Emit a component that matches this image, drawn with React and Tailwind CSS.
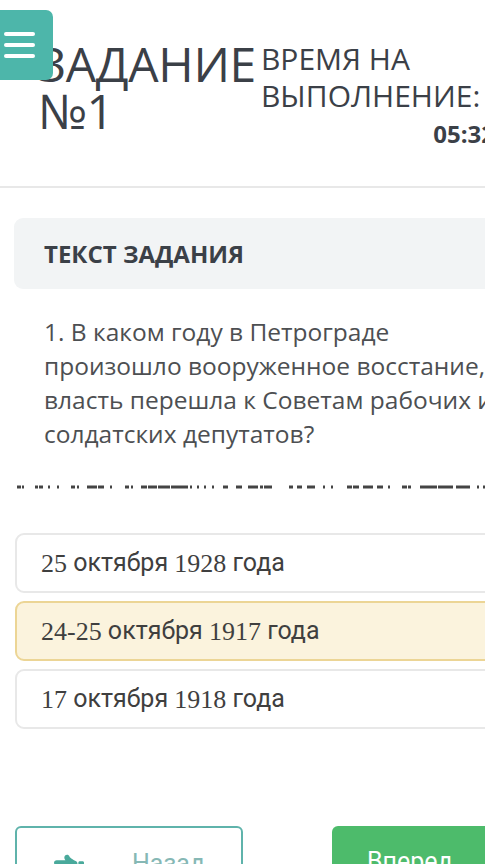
import React from "react";
import { FaHandPointLeft } from "react-icons/fa";

const dashes = [
  [17, 4], [22, 2], [35, 3], [39, 4], [48, 2], [57, 2], [71, 4], [77, 2],
  [87, 10], [98, 6], [110, 2], [125, 4], [131, 2], [141, 6], [148, 9],
  [158, 12], [171, 17], [190, 2], [197, 2], [204, 2], [212, 2], [223, 5],
  [236, 6], [248, 10], [260, 3], [264, 8], [289, 4], [297, 5], [307, 8],
  [323, 2], [331, 2], [347, 5], [353, 6], [363, 10], [377, 6], [388, 2],
  [402, 5], [408, 3], [420, 17], [438, 15], [456, 14], [477, 2], [483, 4],
];

function Answer({ children, selected }) {
  return (
    <div
      className={
        "h-[60px] w-[520px] rounded-[9px] border-2 flex items-center pl-[24px] text-[25px] text-[#3f3f3f] " +
        (selected ? "bg-[#fbf3dd] border-[#ecd595]" : "bg-white border-[#e8e8e8]")
      }
      style={{ fontFamily: "Roboto, 'Noto Sans', sans-serif" }}
    >
      {children}
    </div>
  );
}

const D = ({ children }) => (
  <span className="text-[26px]" style={{ fontFamily: "'Liberation Serif', serif" }}>
    {children}
  </span>
);

export default function App() {
  return (
    <div
      className="relative w-[485px] h-[864px] overflow-hidden bg-white"
      style={{ fontFamily: "'Open Sans', sans-serif" }}
    >
      {/* Header */}
      <div className="relative h-[188px] border-b-2 border-[#e8e8e8] w-[600px]">
        <div className="flex pl-[38px] pt-[40px] gap-[5px]">
          <div className="text-[48px] leading-[47px] text-[#3b4047] font-normal tracking-[-0.3px]">
            <div>ЗАДАНИЕ</div>
            <div>№1</div>
          </div>
          <div className="flex flex-col pt-[0px] w-[234px]">
            <div className="text-[30px] leading-[37px] text-[#3b4047] font-normal">
              <div>ВРЕМЯ НА</div>
              <div>ВЫПОЛНЕНИЕ:</div>
            </div>
            <div className="text-right text-[24px] font-bold text-[#3b4047] leading-[40px]">
              05:32
            </div>
          </div>
        </div>
        <div className="absolute left-0 top-[10px] w-[53px] h-[70px] bg-[#4db6aa] rounded-r-[7px] flex flex-col gap-[7px] pl-[4px] pt-[22px]">
          <div className="w-[31px] h-[4px] bg-white rounded-full" />
          <div className="w-[31px] h-[4px] bg-white rounded-full" />
          <div className="w-[31px] h-[4px] bg-white rounded-full" />
        </div>
      </div>

      {/* Task box */}
      <div className="ml-[14px] mt-[30px] w-[520px] h-[71px] bg-[#f2f4f5] rounded-[9px] flex items-center pl-[30px]">
        <span className="text-[24px] font-bold text-[#3b4047]">ТЕКСТ ЗАДАНИЯ</span>
      </div>

      {/* Question */}
      <div className="pl-[44px] pt-[26px] text-[24.5px] leading-[34px] text-[#4d4f52] whitespace-nowrap">
        <div>1. В каком году в Петрограде</div>
        <div>произошло вооруженное восстание, и</div>
        <div>власть перешла к Советам рабочих и</div>
        <div>солдатских депутатов?</div>
      </div>

      {/* Dashed line */}
      <svg className="block mt-[34px]" width="485" height="4" viewBox="0 0 485 4">
        {dashes.map(([x, w], i) => (
          <rect key={i} x={x} y="0.5" width={w} height="3" fill="#444444" />
        ))}
      </svg>

      {/* Answers */}
      <div className="ml-[15px] mt-[44px] flex flex-col gap-[8px]">
        <Answer>
          <D>25</D>&nbsp;октября&nbsp;<D>1928</D>&nbsp;года
        </Answer>
        <Answer selected>
          <D>24-25</D>&nbsp;октября&nbsp;<D>1917</D>&nbsp;года
        </Answer>
        <Answer>
          <D>17</D>&nbsp;октября&nbsp;<D>1918</D>&nbsp;года
        </Answer>
      </div>

      {/* Buttons */}
      <div className="flex mt-[97px] pl-[15px] gap-[89px] w-[700px]">
        <div className="shrink-0 w-[228px] h-[60px] border-2 border-[#5fb3ab] rounded-[6px] flex items-start pt-[21px] pl-[37px]">
          <FaHandPointLeft className="shrink-0 text-[#49a99b] mt-[2px]" size={30} />
          <span className="ml-[48px] text-[25px] leading-[30px] text-[#86b8b5]" style={{ fontFamily: "Roboto, sans-serif" }}>
            Назад
          </span>
        </div>
        <div className="shrink-0 w-[228px] h-[60px] bg-[#4dbb6b] rounded-[6px] flex items-start pt-[21px] pl-[35px]">
          <span className="text-[25px] leading-[30px] text-white" style={{ fontFamily: "Roboto, sans-serif" }}>
            Вперед
          </span>
        </div>
      </div>
    </div>
  );
}
